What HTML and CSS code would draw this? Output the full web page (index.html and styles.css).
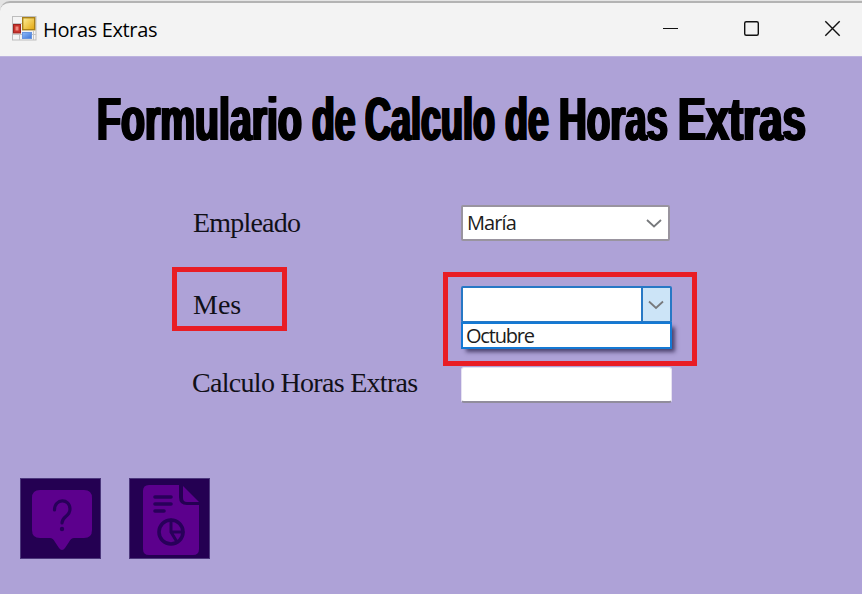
FILE: index.html
```html
<!DOCTYPE html>
<html lang="es">
<head>
<meta charset="utf-8">
<title>Horas Extras</title>
<link rel="stylesheet" href="styles.css">
</head>
<body>
<div class="window">
  <header class="titlebar">
    <svg class="app-icon" width="25" height="25" viewBox="0 0 25 25">
      <defs>
        <linearGradient id="gold" x1="0" y1="0" x2="1" y2="1"><stop offset="0" stop-color="#ffef9a"/><stop offset="1" stop-color="#e2a50c"/></linearGradient>
        <linearGradient id="blue" x1="0" y1="0" x2="1" y2="1"><stop offset="0" stop-color="#8fbcf8"/><stop offset="1" stop-color="#3c74d8"/></linearGradient>
      </defs>
      <rect x=".5" y=".5" width="23.500" height="23.500" fill="#f4f4f4" stroke="#bdbdbd"/>
      <path d="M1 7.500H10M1 18.500H24M7.500 18V24M21.500 15V24" stroke="#c4c4c4"/>
      <rect x="10.700" y="1.700" width="12" height="12" fill="url(#gold)" stroke="#a98018" stroke-width="1.400"/>
      <rect x="1.500" y="8.500" width="7" height="8.500" fill="#c7322b" stroke="#9b2420"/>
      <rect x="3.500" y="10.500" width="3" height="4" fill="#ef8b80"/>
      <rect x="10.500" y="16.500" width="9" height="6" fill="url(#blue)" stroke="#6795df"/>
    </svg>
    <span class="caption">Horas Extras</span>
    <svg class="controls" width="180" height="18" viewBox="0 0 180 18" fill="none" stroke="#111" stroke-width="1.4">
      <path d="M1 8.500H16" stroke-width="1"/>
      <rect x="82.700" y="1.700" width="13.600" height="13.600" rx="1.500"/>
      <path d="M163.300 1.300L177.700 15.700M177.700 1.300L163.300 15.700"/>
    </svg>
  </header>
  <main class="client">
    <h1 class="heading">
      <span class="word w1"><span>Formulario</span></span>
      <span class="word w2"><span>de</span></span>
      <span class="word w3"><span>Calculo</span></span>
      <span class="word w4"><span>de</span></span>
      <span class="word w5"><span>Horas</span></span>
      <span class="word w6"><span>Extras</span></span>
    </h1>
    <div class="form">
      <div class="row">
        <label class="label l-emp">Empleado</label>
        <div class="combo"><span class="value">María</span><svg class="chev" width="18" height="12" viewBox="0 0 18 12"><path d="M2 3L9 9.500L16 3"/></svg></div>
      </div>
      <div class="row row-mes">
        <label class="label l-mes">Mes</label>
        <div class="combo combo-open">
          <div class="drop"><svg class="chev" width="18" height="12" viewBox="0 0 18 12"><path d="M2 2.500L9 9L16 2.500"/></svg></div>
          <div class="menu">Octubre</div>
        </div>
        <div class="mark mark-label"></div>
        <div class="mark mark-combo"></div>
      </div>
      <div class="row">
        <label class="label l-calc">Calculo Horas Extras</label>
        <div class="textbox"></div>
      </div>
    </div>
    <div class="actions">
      <svg width="81" height="81" viewBox="0 0 81 81">
        <rect x=".5" y=".5" width="80" height="80" fill="#240052" stroke="#4b377b"/>
        <path d="M20 12H64Q72 12 72 20V52Q72 60 64 60H54Q51 60 49 64L45 70Q42 74 39 70L35 64Q33 60 30 60H20Q12 60 12 52V20Q12 12 20 12Z" fill="#5c008d"/>
        <path d="M34.500 32C34.500 20 50 20 50 31C50 39 42 38 42 45" fill="none" stroke="#28005a" stroke-width="3.200" stroke-linecap="round"/>
        <circle cx="42" cy="51" r="2.200" fill="#28005a"/>
      </svg>
      <svg width="81" height="81" viewBox="0 0 81 81">
        <rect x=".5" y=".5" width="80" height="80" fill="#240052" stroke="#4b377b"/>
        <path d="M20 7H50V19Q50 27 58 27H70V71Q70 77 64 77H20Q14 77 14 71V13Q14 7 20 7ZM54 8L70 24H58Q54 24 54 20Z" fill="#5c008d"/>
        <g fill="none" stroke="#28005a" stroke-width="3.600" stroke-linecap="round">
          <path d="M26 19H42M26 26H42M26 33H35"/>
          <circle cx="42" cy="54" r="12"/>
          <path d="M42 42V54L48 64M43 54H54" stroke-width="3"/>
        </g>
      </svg>
    </div>
  </main>
</div>
</body>
</html>
```
FILE: styles.css
```css
* { box-sizing: border-box; }
body { margin: 0; background: #e4e4e4; overflow: hidden; }
.window {
  width: 862px; height: 594px; padding-top: 1px;
  display: flex; flex-direction: column;
}
.titlebar {
  height: 55px; flex: none; display: flex; align-items: center;
  padding: 0 20px 0 12px; background: #f3f3f3;
  border-top: 2px solid #b3b3b3; border-top-left-radius: 10px;
}
.app-icon { margin-top: -2px; }
.controls { margin-top: -2px; }
.caption {
  margin-left: 6px; flex: 1; color: #000;
  font: 20px/28px "Open Sans", "Noto Sans", sans-serif;
  letter-spacing: -0.35px;
}
.client {
  flex: 1; background: #aea2d7; border-top: 1px solid #bcb3de;
  display: flex; flex-direction: column;
}
.heading {
  display: flex; gap: 10px; height: 60px; margin: 32px 0 0 97px; flex: none;
  font: bold 61px/60px "Liberation Sans", Arial, sans-serif; color: #000;
}
/* Each word is condensed horizontally; the side shadows thicken its stems. */
.word { display: block; height: 60px; white-space: nowrap; }
.word > span {
  display: inline-block; transform-origin: 0 50%;
  text-shadow: 1px 0 #000, -1px 0 #000, 2px 0 #000, -2px 0 #000;
}
.w1 { width: 205px; } .w1 > span { transform: scaleX(.643); }
.w2 { width: 43px; }  .w2 > span { transform: scaleX(.61); }
.w3 { width: 130px; } .w3 > span { transform: scaleX(.59); }
.w4 { width: 44px; }  .w4 > span { transform: scaleX(.617); }
.w5 { width: 109px; } .w5 > span { transform: scaleX(.63); }
.w6 { width: 128px; } .w6 > span { transform: scaleX(.685); }
.form {
  margin: 56px 0 0 193px;
  display: flex; flex-direction: column; gap: 45px;
}
.row {
  display: grid; grid-template-columns: 268px 211px;
  height: 36px; align-items: center; position: relative;
}
.label { font: 28px/36px "Liberation Serif", serif; color: #111018; white-space: nowrap; }
.l-emp { letter-spacing: -0.8px; }
.l-calc { letter-spacing: -0.7px; margin: -5px 0 0 -1px; }
.combo {
  width: 209px; height: 36px; padding: 0 5px 0 4px;
  display: flex; align-items: center; justify-content: space-between;
  background: #fff; border: 2px solid #99949f; border-radius: 2px;
  font: 20px/28px "Open Sans", "Noto Sans", sans-serif; color: #1c1c20;
}
.value { letter-spacing: -0.9px; }
.chev { fill: none; stroke: #77797c; stroke-width: 1.8; }
.combo-open {
  width: 211px; height: 37px; padding: 0; position: relative;
  justify-content: flex-end; border: 2px solid #2778c5;
}
.drop {
  width: 29px; height: 33px; background: #cce4f7; border-left: 2px solid #2778c5;
  display: flex; align-items: center; justify-content: center;
}
.combo-open .chev { margin-right: 2px; }
.menu {
  position: absolute; left: -2px; top: 34px; width: 211px; height: 27px;
  padding-left: 3px; background: #fff; border: 2px solid #1479d4;
  line-height: 23px; letter-spacing: -1.2px;
  box-shadow: 4px 4px 4px -1px rgba(35, 25, 65, .7);
}
.textbox {
  width: 211px; height: 36px; background: #fff; border-radius: 3px;
  border: 1px solid #e6e2f1; border-bottom: 2px solid #918d9c;
}
.mark { position: absolute; border: 5px solid #e91d25; }
.mark-label { left: -21px; top: -19px; width: 115px; height: 64px; }
.mark-combo { left: 250px; top: -14px; width: 254px; height: 94px; }
.actions { display: flex; gap: 28px; margin: 75px 0 0 20px; }
```
